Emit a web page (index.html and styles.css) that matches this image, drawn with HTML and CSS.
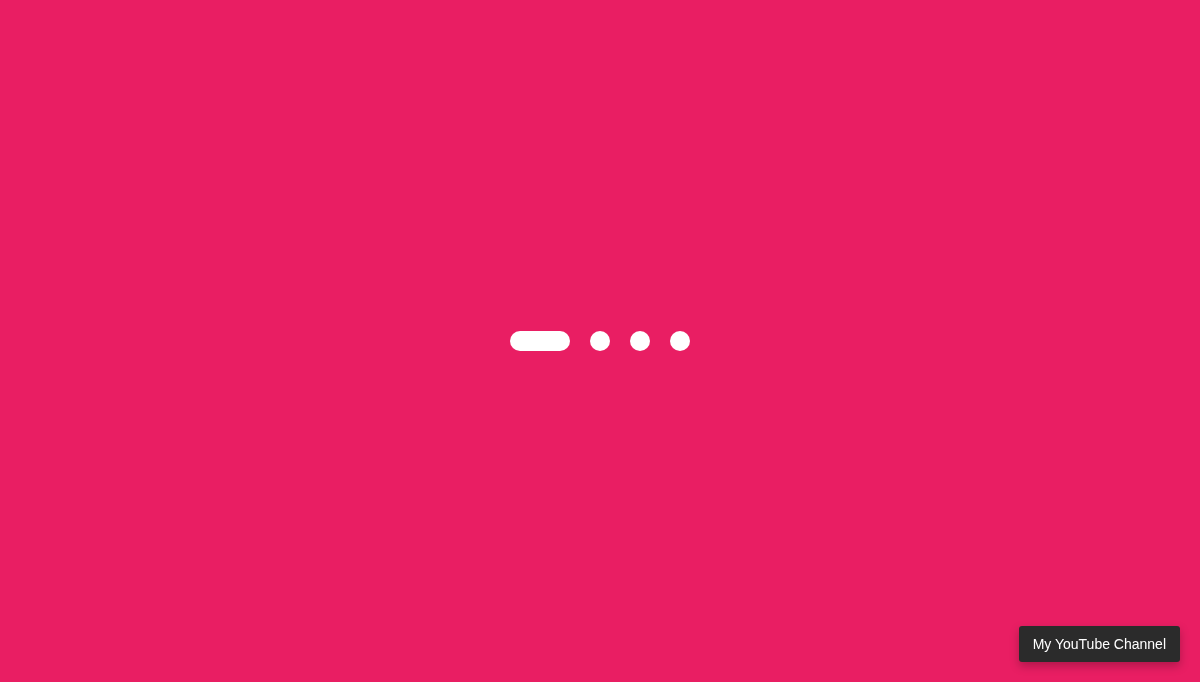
FILE: index.html
```html
<!DOCTYPE html>
<html>
<head>
<meta charset="utf-8">
<link rel="stylesheet" href="styles.css">
</head>
<body>
<main class="stage">
  <div class="loader">
    <span class="bar"></span>
    <span class="dot"></span>
    <span class="dot"></span>
    <span class="dot"></span>
  </div>
</main>
<a class="yt-link" href="#">My YouTube Channel</a>
</body>
</html>
```
FILE: styles.css
```css
html, body {
  margin: 0;
  padding: 0;
  height: 100%;
}
body {
  background: #e91e63;
  font-family: "Liberation Sans", Arial, sans-serif;
  overflow: hidden;
}
.stage {
  height: 100%;
  display: flex;
  align-items: center;
  justify-content: center;
}
.loader {
  display: flex;
  gap: 20px;
  align-items: center;
}
.bar {
  width: 60px;
  height: 20px;
  border-radius: 10px;
  background: #fff;
}
.dot {
  width: 20px;
  height: 20px;
  border-radius: 50%;
  background: #fff;
}
.yt-link {
  position: fixed;
  right: 20px;
  bottom: 20px;
  height: 36px;
  box-sizing: border-box;
  padding: 0 14px;
  display: flex;
  align-items: center;
  background: #2b2b2b;
  color: #fff;
  font-size: 14px;
  text-decoration: none;
  border-radius: 3px;
  box-shadow: 0 4px 10px rgba(0, 0, 0, 0.25);
}
```
